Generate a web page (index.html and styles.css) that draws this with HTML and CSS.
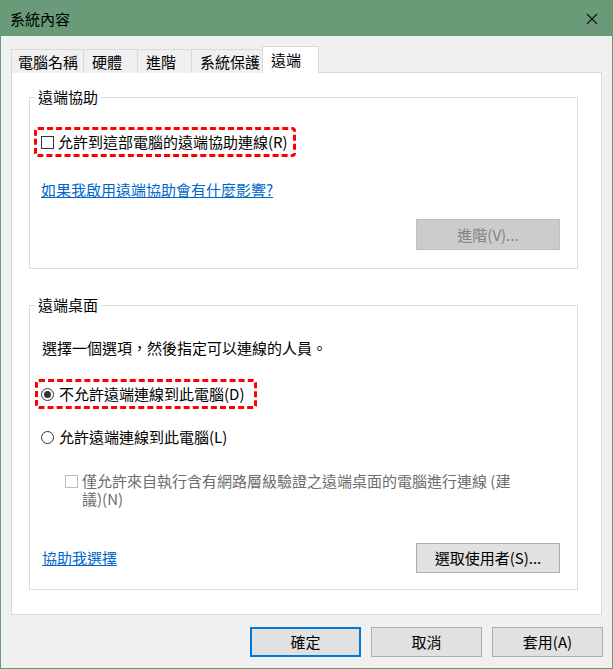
FILE: index.html
```html
<!DOCTYPE html>
<html lang="zh-Hant">
<head>
<meta charset="utf-8">
<title>系統內容</title>
<link rel="stylesheet" href="styles.css">
</head>
<body>
<div class="window">
  <div class="titlebar">
    <span class="title">系統內容</span>
    <svg class="close" width="12" height="12" viewBox="0 0 12 12"><path d="M1 1 L11 11 M11 1 L1 11" stroke="#111" stroke-width="1.1" fill="none"/></svg>
  </div>
  <div class="content">
    <div class="tabs">
      <div class="tab t1">電腦名稱</div>
      <div class="tab t2">硬體</div>
      <div class="tab t3">進階</div>
      <div class="tab t4">系統保護</div>
      <div class="tab active">遠端</div>
    </div>
    <div class="panel">
      <div class="group g1">
        <div class="legend">遠端協助</div>
        <div class="hl hl1"><span class="checkbox"></span><span>允許到這部電腦的遠端協助連線(R)</span></div>
        <div class="link l1">如果我啟用遠端協助會有什麼影響?</div>
        <div class="btnrow"><div class="btn disabled">進階(V)...</div></div>
      </div>
      <div class="group g2">
        <div class="legend">遠端桌面</div>
        <div class="desc">選擇一個選項，然後指定可以連線的人員。</div>
        <div class="hl hl2"><span class="radio on"></span><span>不允許遠端連線到此電腦(D)</span></div>
        <div class="opt"><span class="radio"></span><span>允許遠端連線到此電腦(L)</span></div>
        <div class="nla"><span class="checkbox dis"></span><span class="nlatext">僅允許來自執行含有網路層級驗證之遠端桌面的電腦進行連線 (建議)(N)</span></div>
        <div class="bottomrow">
          <span class="link">協助我選擇</span>
          <div class="btn">選取使用者(S)...</div>
        </div>
      </div>
    </div>
    <div class="footer">
      <div class="btn fbtn default">確定</div>
      <div class="btn fbtn">取消</div>
      <div class="btn fbtn">套用(A)</div>
    </div>
  </div>
</div>
</body>
</html>
```
FILE: styles.css
```css
* { box-sizing: border-box; }
html, body { margin: 0; padding: 0; background: #f0f0f0; }
body {
  font-family: "Noto Sans CJK TC", "Noto Sans", "Liberation Sans", sans-serif;
  font-size: 15px;
  color: #000;
}
.window {
  width: 613px;
  height: 669px;
  border: 1px solid #6a9b78;
  background: #f0f0f0;
  display: flex;
  flex-direction: column;
}
.titlebar {
  height: 35px;
  background: #699b78;
  display: flex;
  align-items: center;
  justify-content: space-between;
  padding: 0 14px 0 9px;
  flex: none;
}
.title { line-height: 20px; }
.close { display: block; }
.content {
  padding: 10px 10px 0 10px;
}
.tabs {
  display: flex;
  align-items: flex-end;
  height: 27px;
  margin-bottom: -1px;
  position: relative;
  z-index: 1;
}
.tab {
  height: 24px;
  border: 1px solid #d9d9d9;
  border-bottom: none;
  border-right: none;
  background: #f0f0f0;
  line-height: 23px;
  padding-left: 6px;
  white-space: nowrap;
}
.t1 { width: 72px; }
.t2 { width: 54px; padding-left: 8px; }
.t3 { width: 54px; padding-left: 8px; }
.t4 { width: 73px; padding-left: 8px; }
.tab.active {
  height: 27px;
  width: 57px;
  margin-left: -2px;
  background: #fff;
  border-right: 1px solid #d9d9d9;
  padding-left: 8px;
  line-height: 25px;
}
.panel {
  height: 543px;
  border: 1px solid #d9d9d9;
  background: #fff;
  padding-top: 24px;
}
.group {
  border: 1px solid #dcdcdc;
  margin-left: 17px;
  width: 549px;
}
.g1 { height: 172px; }
.g2 { height: 285px; margin-top: 36px; }
.legend {
  display: block;
  width: fit-content;
  background: #fff;
  line-height: 20px;
  height: 20px;
  margin-top: -11px;
  margin-left: 5px;
  padding: 0 3px;
}
.hl {
  display: flex;
  align-items: center;
  height: 30px;
  border: 3px dashed #ff0000;
  border-radius: 4px;
  line-height: 20px;
  white-space: nowrap;
}
.hl1 {
  width: 262px;
  margin: 20px 0 0 4px;
  padding-left: 4px;
}
.hl2 {
  width: 222px;
  margin: 21px 0 0 5px;
  padding-left: 3px;
}
.checkbox {
  width: 13px;
  height: 13px;
  border: 1px solid #333;
  background: #fff;
  margin-right: 4px;
  flex: none;
}
.checkbox.dis { border-color: #bcbcbc; }
.radio {
  width: 13px;
  height: 13px;
  border: 1px solid #333;
  border-radius: 50%;
  background: #fff;
  margin-right: 5px;
  flex: none;
  display: flex;
  align-items: center;
  justify-content: center;
}
.radio.on::after {
  content: "";
  width: 7px;
  height: 7px;
  border-radius: 50%;
  background: #333;
}
.link {
  color: #0066cc;
  text-decoration: underline;
  line-height: 20px;
}
.l1 { margin: 23px 0 0 11px; width: fit-content; }
.btnrow {
  display: flex;
  justify-content: flex-end;
  margin: 19px 17px 0 0;
}
.btn {
  width: 144px;
  height: 31px;
  border: 1px solid #adadad;
  background: #e1e1e1;
  display: flex;
  align-items: center;
  justify-content: center;
  line-height: 20px;
  white-space: nowrap;
}
.btn.disabled {
  background: #cccccc;
  border-color: #bfbfbf;
  color: #838383;
}
.desc {
  line-height: 20px;
  margin: 23px 0 0 12px;
}
.opt {
  display: flex;
  align-items: center;
  line-height: 20px;
  margin: 18px 0 0 11px;
}
.nla {
  display: flex;
  align-items: flex-start;
  margin: 25px 0 0 35px;
  color: #6d6d6d;
  line-height: 18px;
}
.nla .checkbox { margin-top: 3px; margin-right: 4px; }
.nlatext { width: 445px; }
.bottomrow {
  display: flex;
  justify-content: space-between;
  align-items: center;
  margin: 35px 17px 0 12px;
}
.bottomrow .btn { height: 30px; }
.footer {
  display: flex;
  justify-content: flex-end;
  gap: 10px;
  margin-top: 12px;
  margin-right: -1px;
}
.fbtn {
  width: 111px;
  height: 30px;
}
.fbtn.default {
  border: 2px solid #0078d7;
}
```
